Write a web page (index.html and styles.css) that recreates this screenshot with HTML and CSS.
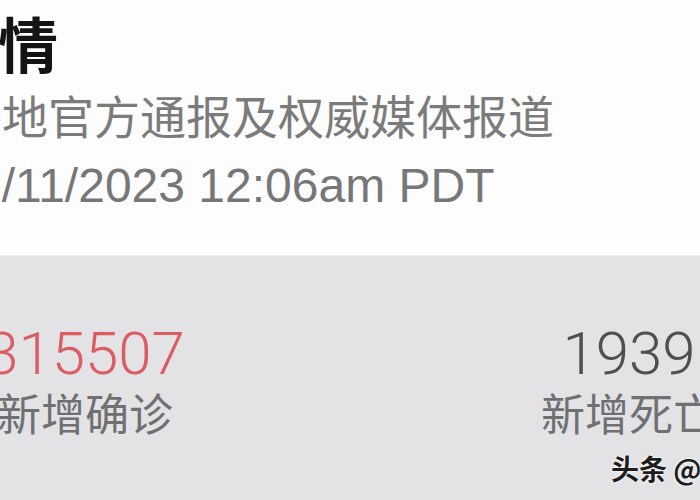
FILE: index.html
```html
<!DOCTYPE html>
<html lang="zh-CN">
<head>
<meta charset="utf-8">
<title>疫情</title>
<link rel="stylesheet" href="styles.css">
</head>
<body>
<div class="page">
  <header class="head">
    <h1 class="title">疫情</h1>
    <p class="source">各地官方通报及权威媒体报道</p>
    <p class="date">1/11/2023 12:06am PDT</p>
  </header>
  <section class="band">
    <div class="stats">
      <div class="stat">
        <div class="num red">315507</div>
        <div class="label">新增确诊</div>
      </div>
      <div class="stat">
        <div class="num dark">1939</div>
        <div class="label">新增死亡</div>
      </div>
    </div>
  </section>
  <div class="mark">头条 @新闻</div>
</div>
</body>
</html>
```

FILE: styles.css
```css
html, body {
  margin: 0;
  padding: 0;
}
body {
  width: 700px;
  height: 500px;
  overflow: hidden;
  background: #fdfdfd;
  font-family: "Liberation Sans", "Noto Sans CJK SC", sans-serif;
}
.page {
  position: relative;
  width: 700px;
  height: 500px;
  overflow: hidden;
  display: flex;
  flex-direction: column;
}
.head {
  padding-top: 12px;
  height: 255px;
  flex: none;
  box-sizing: border-box;
  white-space: nowrap;
}
.title {
  margin: 0 0 0 -62px;
  font-family: "Noto Sans CJK SC", sans-serif;
  font-size: 60px;
  line-height: 60px;
  font-weight: 700;
  color: #141414;
}
.source {
  margin: 19px 0 0 -44px;
  font-family: "Noto Sans CJK SC", sans-serif;
  font-size: 46px;
  line-height: 46px;
  font-weight: 400;
  color: #7b7b7b;
}
.date {
  margin: 25px 0 0 -25px;
  font-family: "Liberation Sans", sans-serif;
  font-size: 48px;
  line-height: 47px;
  color: #777;
}
.band {
  flex: 1;
  background: #e3e3e5;
  border-top: 1px solid #ececec;
}
.stats {
  display: flex;
  gap: 284px;
  margin-left: -45px;
  padding-top: 68px;
}
.stat {
  width: 260px;
  flex: none;
  text-align: center;
  white-space: nowrap;
}
.num {
  font-family: Roboto, "Liberation Sans", sans-serif;
  font-weight: 300;
  font-size: 60px;
  line-height: 60px;
}
.red { color: #dc5c64; }
.dark { color: #4f4f51; }
.label {
  margin-top: 6px;
  font-family: "Noto Sans CJK SC", sans-serif;
  font-size: 44px;
  line-height: 44px;
  color: #707072;
}
.mark {
  position: absolute;
  left: 611px;
  top: 450px;
  font-family: "Noto Sans CJK SC", sans-serif;
  font-weight: 700;
  font-size: 28px;
  line-height: 36px;
  color: #1e1e1e;
  white-space: nowrap;
  text-shadow: 0 0 2px #fff, 0 0 3px #fff;
}
```
